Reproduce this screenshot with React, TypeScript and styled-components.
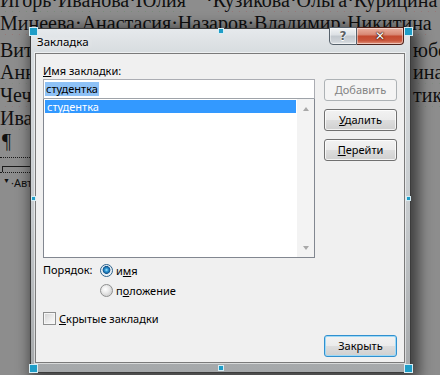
import styled, { createGlobalStyle } from 'styled-components';

const GlobalStyle = createGlobalStyle`
  html, body {
    margin: 0;
    padding: 0;
  }
  body {
    width: 440px;
    height: 375px;
    overflow: hidden;
    background: #8c8c8c;
  }
`;

const Screen = styled.div`
  position: relative;
  width: 440px;
  height: 375px;
  overflow: hidden;
  background: #8d8d8d;
`;

// document behind the dialog
const Doc = styled.div`
  margin-top: -11px;
  font-family: 'Liberation Serif', 'Times New Roman', serif;
  font-size: 20px;
  line-height: 22.8px;
  color: #101010;
`;

const DocLine = styled.div<{ $gap?: number }>`
  display: grid;
  grid-template-columns: 413px 1fr;
  white-space: nowrap;
  overflow: hidden;
  margin-top: ${({ $gap }) => $gap || 0}px;
`;

const FullLine = styled.div`
  white-space: nowrap;
  overflow: hidden;
`;

const Word = styled.span<{ $mark?: 'red' | 'green' }>`
  text-decoration: ${({ $mark }) => ($mark ? `underline wavy ${$mark === 'red' ? '#b42222' : '#2f7a2f'}` : 'none')};
  text-decoration-thickness: 1px;
  text-underline-offset: 4px;
`;

const Pilcrow = styled.div`
  padding-left: 2px;
`;

const FrameMark = styled.div`
  margin-top: 4px;
  width: 60px;
  height: 14px;
  border-top: 1px dotted #1a1a1a;
  border-bottom: 1px dotted #1a1a1a;
  display: flex;
  align-items: flex-end;
`;

const FrameTick = styled.div`
  margin-left: 2px;
  width: 58px;
  height: 5px;
  border-top: 1px solid #1a1a1a;
  border-left: 1px solid #1a1a1a;
`;

const Anchor = styled.div`
  margin-top: 3px;
  padding-left: 3px;
  font-family: 'Noto Sans', 'Liberation Sans', sans-serif;
  font-size: 11px;
  line-height: 14px;
  color: #101010;
  display: flex;
  align-items: center;
  gap: 1px;
`;

const AnchorArrow = styled.span`
  font-size: 7px;
  line-height: 7px;
  align-self: flex-start;
  margin-top: 1px;
`;

// dialog window
const Dialog = styled.div`
  position: absolute;
  left: 30px;
  top: 28px;
  width: 381px;
  height: 345px;
  box-sizing: border-box;
  border: 1px solid #3c3c3c;
  border-radius: 6px 6px 0 0;
  background: linear-gradient(to bottom, #e6e9ec 0, #d7dcdf 24px, #c6cacd 55%, #a5a8aa 100%);
  box-shadow: 4px 3px 14px 4px rgba(0, 0, 0, 0.55);
  display: flex;
  flex-direction: column;
  padding: 0 5px 9px 4px;
  font-family: 'Noto Sans', 'Open Sans', sans-serif;
  font-size: 11px;
  color: #000;
`;

const TitleBar = styled.div`
  height: 24px;
  display: flex;
  align-items: flex-start;
`;

const TitleText = styled.span`
  margin-top: 6px;
  padding-left: 2px;
  font-size: 11.5px;
  line-height: 14px;
  flex: 1;
  text-shadow: 0 0 6px rgba(255, 255, 255, 0.9);
`;

const CaptionButton = styled.div<{ $close?: boolean }>`
  margin-top: -2px;
  width: ${({ $close }) => ($close ? 47 : 28)}px;
  height: 18px;
  box-sizing: border-box;
  border: 1px solid ${({ $close }) => ($close ? '#4e2119' : '#56616b')};
  border-left-width: ${({ $close }) => ($close ? 0 : 1)}px;
  border-radius: ${({ $close }) => ($close ? '0 0 4px 0' : '0 0 0 4px')};
  background: ${({ $close }) =>
    $close
      ? 'linear-gradient(to bottom, #eab0a0 0, #d98a76 40%, #c44a30 52%, #c9563c 80%, #e39a84 100%)'
      : 'linear-gradient(to bottom, #f2f4f6 0, #dde1e5 42%, #c2c8ce 52%, #cfd4d9 85%, #e5e8eb 100%)'};
  box-shadow: inset 0 0 0 1px rgba(255, 255, 255, 0.45);
  display: flex;
  align-items: center;
  justify-content: center;
  margin-right: ${({ $close }) => ($close ? 1 : 0)}px;
`;

const CaptionGlyph = styled.span<{ $close?: boolean }>`
  font-family: 'DejaVu Sans', sans-serif;
  font-weight: bold;
  font-size: 12px;
  line-height: 12px;
  color: ${({ $close }) => ($close ? '#ffffff' : '#5b5f63')};
  text-shadow: ${({ $close }) =>
    $close
      ? '0 0 1px #3a1008, 0 0 1px #3a1008, 0 0 2px #3a1008'
      : '0 0 1px #ffffff, 0 0 1px #ffffff, 0 1px 0 #ffffff'};
`;

const Client = styled.div`
  flex: 1;
  background: #f0f0f0;
  border: 1px solid #7a7a7a;
  box-shadow: 0 0 0 1px rgba(255, 255, 255, 0.55);
  display: flex;
  flex-direction: column;
  padding: 9px 7px 5px 7px;
`;

const Label = styled.div`
  line-height: 16px;
  height: 16px;
`;

const MainRow = styled.div`
  display: grid;
  grid-template-columns: 272px 73px;
  column-gap: 9px;
  align-items: start;
`;

const NameColumn = styled.div`
  display: flex;
  flex-direction: column;
`;

const NameInput = styled.div`
  height: 20px;
  box-sizing: border-box;
  border: 1px solid #abadb3;
  border-bottom-color: #9ea3a9;
  background: #fff;
  padding: 1px 1px;
  display: flex;
  align-items: center;
`;

const Selected = styled.span`
  background: #8fc2f6;
  padding: 0 1px;
  line-height: 14px;
`;

const ListBox = styled.div`
  height: 159px;
  box-sizing: border-box;
  border: 1px solid #828790;
  border-top: none;
  background: #fff;
  display: grid;
  grid-template-columns: 1fr 17px;
`;

const Items = styled.div`
  padding: 1px 1px 0 1px;
`;

const Item = styled.div<{ $active?: boolean }>`
  height: 13px;
  line-height: 13px;
  padding-left: 2px;
  background: ${({ $active }) => ($active ? '#3399ff' : 'transparent')};
  color: ${({ $active }) => ($active ? '#fff' : '#000')};
`;

const ScrollBar = styled.div`
  background: #f3f3f3;
  display: flex;
  flex-direction: column;
  justify-content: space-between;
  align-items: center;
  padding: 8px 0 7px 0;
`;

const Arrow = styled.span<{ $down?: boolean }>`
  width: 0;
  height: 0;
  border-left: 3.5px solid transparent;
  border-right: 3.5px solid transparent;
  ${({ $down }) => ($down ? 'border-top: 4px solid #a9a9a9;' : 'border-bottom: 4px solid #a9a9a9;')}
`;

const ButtonColumn = styled.div`
  display: flex;
  flex-direction: column;
  gap: 8px;
`;

const Button = styled.button<{ $default?: boolean }>`
  width: 73px;
  height: 22px;
  box-sizing: border-box;
  padding: 0;
  border: 1px solid ${({ $default }) => ($default ? '#3090cf' : '#707070')};
  border-radius: 3px;
  background: linear-gradient(to bottom, #f2f2f2 0, #ebebeb 48%, #dddddd 52%, #cfcfcf 100%);
  box-shadow: inset 0 0 0 1px ${({ $default }) => ($default ? '#9ed9f6' : 'rgba(255, 255, 255, 0.75)')};
  font-family: 'Noto Sans', 'Open Sans', sans-serif;
  font-size: 11px;
  line-height: 14px;
  color: #000;

  &:disabled {
    border-color: #adb2b5;
    background: #f4f4f4;
    box-shadow: none;
    color: #838383;
  }
`;

const OrderBlock = styled.div`
  margin-top: 2px;
  display: grid;
  grid-template-columns: 57px auto;
  grid-auto-rows: 20px;
  align-items: center;
`;

const OrderLabel = styled.span`
  line-height: 20px;
`;

const Option = styled.label`
  display: flex;
  align-items: center;
  gap: 3px;
  grid-column: 2;
`;

const Radio = styled.span<{ $checked?: boolean }>`
  width: 13px;
  height: 13px;
  box-sizing: border-box;
  border-radius: 50%;
  border: 1px solid ${({ $checked }) => ($checked ? '#2c628b' : '#8e8f8f')};
  background: ${({ $checked }) =>
    $checked
      ? 'radial-gradient(circle at 50% 45%, #a8e8ff 0, #2f9ad8 1.6px, #11558e 3.6px, #dfe7ee 4.2px, #f8fafb 6px)'
      : 'radial-gradient(circle at 40% 38%, #ffffff 0, #e8e8e8 4px, #d8d8d8 6px)'};
`;

const CheckRow = styled.label`
  margin-top: 8px;
  height: 20px;
  display: flex;
  align-items: center;
  gap: 3px;
`;

const CheckBox = styled.span`
  width: 13px;
  height: 13px;
  box-sizing: border-box;
  border: 1px solid #8e8f8f;
  background: linear-gradient(135deg, #d2d2d2 0, #eeeeee 60%, #fafafa 100%);
  box-shadow: inset 0 0 0 1px #f6f6f6;
`;

const Footer = styled.div`
  margin-top: auto;
  display: flex;
  justify-content: flex-end;
`;

const Handle = styled.div<{ $x: number; $y: number; $size: number }>`
  position: absolute;
  left: ${({ $x }) => $x}px;
  top: ${({ $y }) => $y}px;
  width: ${({ $size }) => $size}px;
  height: ${({ $size }) => $size}px;
  box-sizing: border-box;
  background: #1e9dc7;
  border: 1px solid #d6edf5;
`;

const handles = [
  { x: 29, y: 27, size: 9 },
  { x: 218, y: 28, size: 6 },
  { x: 404, y: 27, size: 9 },
  { x: 31, y: 196, size: 5 },
  { x: 406, y: 196, size: 5 },
  { x: 29, y: 364, size: 9 },
  { x: 218, y: 365, size: 6 },
  { x: 404, y: 364, size: 9 },
];

export default function App() {
  return (
    <Screen>
      <GlobalStyle />
      <Doc>
        <FullLine>
          <Word $mark="green">Игорь·Иванова·Юлия</Word>
          {'\u00a0\u00a0\u00a0\u00a0·'}
          <Word $mark="red">Кузикова·Ольга·Курицина</Word>
        </FullLine>
        <FullLine>
          <Word $mark="red">Минеева·Анастасия·Назаров·Владимир·Никитина</Word>
        </FullLine>
        <DocLine $gap={4}>
          <Word $mark="red">Виталий·Пономарёв·Олег</Word>
          <Word $mark="green">юбовь</Word>
        </DocLine>
        <DocLine>
          <Word $mark="green">Анна·Смирнова·Ирина</Word>
          <Word $mark="green">ина</Word>
        </DocLine>
        <DocLine>
          <Word $mark="red">Чечёткина·Вера·Костик</Word>
          <Word $mark="green">тик</Word>
        </DocLine>
        <DocLine>
          <Word $mark="green">Иванов·Пётр</Word>
          <span />
        </DocLine>
        <Pilcrow>¶</Pilcrow>
        <FrameMark>
          <FrameTick />
        </FrameMark>
        <Anchor>
          <AnchorArrow>▼</AnchorArrow>
          <span>·Автор</span>
        </Anchor>
      </Doc>

      <Dialog>
        <TitleBar>
          <TitleText>Закладка</TitleText>
          <CaptionButton>
            <CaptionGlyph>?</CaptionGlyph>
          </CaptionButton>
          <CaptionButton $close>
            <CaptionGlyph $close>✕</CaptionGlyph>
          </CaptionButton>
        </TitleBar>
        <Client>
          <Label>
            <u>И</u>мя закладки:
          </Label>
          <MainRow>
            <NameColumn>
              <NameInput>
                <Selected>студентка</Selected>
              </NameInput>
              <ListBox>
                <Items>
                  <Item $active>студентка</Item>
                </Items>
                <ScrollBar>
                  <Arrow />
                  <Arrow $down />
                </ScrollBar>
              </ListBox>
            </NameColumn>
            <ButtonColumn>
              <Button disabled>Добавить</Button>
              <Button>
                <u>У</u>далить
              </Button>
              <Button>
                <u>П</u>ерейти
              </Button>
            </ButtonColumn>
          </MainRow>
          <OrderBlock>
            <OrderLabel>Порядок:</OrderLabel>
            <Option>
              <Radio $checked />
              <span>
                и<u>м</u>я
              </span>
            </Option>
            <Option>
              <Radio />
              <span>
                п<u>о</u>ложение
              </span>
            </Option>
          </OrderBlock>
          <CheckRow>
            <CheckBox />
            <span>
              <u>С</u>крытые закладки
            </span>
          </CheckRow>
          <Footer>
            <Button $default>Закрыть</Button>
          </Footer>
        </Client>
      </Dialog>

      {handles.map((h, i) => (
        <Handle key={i} $x={h.x} $y={h.y} $size={h.size} />
      ))}
    </Screen>
  );
}
